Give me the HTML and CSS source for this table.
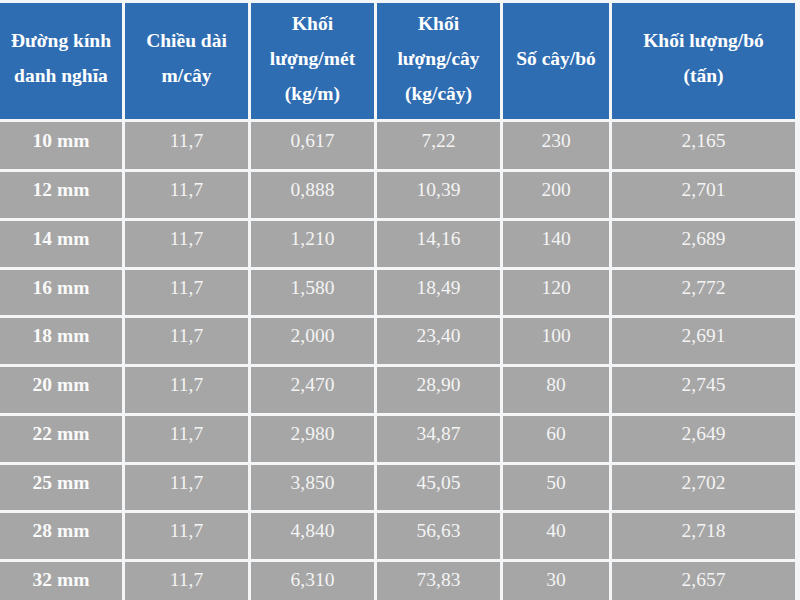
FILE: index.html
```html
<!DOCTYPE html>
<html lang="vi">
<head>
<meta charset="utf-8">
<title>Bảng trọng lượng thép</title>
<link rel="stylesheet" href="styles.css">
</head>
<body>
<div class="table">
  <div class="th">Đường kính<br>danh nghĩa</div>
  <div class="th">Chiều dài<br>m/cây</div>
  <div class="th">Khối<br>lượng/mét<br>(kg/m)</div>
  <div class="th">Khối<br>lượng/cây<br>(kg/cây)</div>
  <div class="th">Số cây/bó</div>
  <div class="th">Khối lượng/bó<br>(tấn)</div>

  <div class="td b">10 mm</div><div class="td">11,7</div><div class="td">0,617</div><div class="td">7,22</div><div class="td">230</div><div class="td">2,165</div>
  <div class="td b">12 mm</div><div class="td">11,7</div><div class="td">0,888</div><div class="td">10,39</div><div class="td">200</div><div class="td">2,701</div>
  <div class="td b">14 mm</div><div class="td">11,7</div><div class="td">1,210</div><div class="td">14,16</div><div class="td">140</div><div class="td">2,689</div>
  <div class="td b">16 mm</div><div class="td">11,7</div><div class="td">1,580</div><div class="td">18,49</div><div class="td">120</div><div class="td">2,772</div>
  <div class="td b">18 mm</div><div class="td">11,7</div><div class="td">2,000</div><div class="td">23,40</div><div class="td">100</div><div class="td">2,691</div>
  <div class="td b">20 mm</div><div class="td">11,7</div><div class="td">2,470</div><div class="td">28,90</div><div class="td">80</div><div class="td">2,745</div>
  <div class="td b">22 mm</div><div class="td">11,7</div><div class="td">2,980</div><div class="td">34,87</div><div class="td">60</div><div class="td">2,649</div>
  <div class="td b">25 mm</div><div class="td">11,7</div><div class="td">3,850</div><div class="td">45,05</div><div class="td">50</div><div class="td">2,702</div>
  <div class="td b">28 mm</div><div class="td">11,7</div><div class="td">4,840</div><div class="td">56,63</div><div class="td">40</div><div class="td">2,718</div>
  <div class="td b">32 mm</div><div class="td">11,7</div><div class="td">6,310</div><div class="td">73,83</div><div class="td">30</div><div class="td">2,657</div>
</div>
</body>
</html>
```

FILE: styles.css
```css
html, body {
  margin: 0;
  padding: 0;
  background: #f3f5f7;
  overflow: hidden;
}

.table {
  display: grid;
  grid-template-columns: 122px 123px 123px 123px 106px 183px;
  grid-template-rows: 116px 47px repeat(9, 45.75px);
  gap: 3px;
  padding-top: 3px;
  width: 795px;
  font-family: "Liberation Serif", "Times New Roman", serif;
  font-size: 19.5px;
}

.th {
  background: #2f6db3;
  color: #ffffff;
  font-weight: bold;
  line-height: 35px;
  display: flex;
  align-items: center;
  justify-content: center;
  text-align: center;
  padding-bottom: 6px;
  box-sizing: border-box;
}

.td {
  background: #a6a6a6;
  color: #f4f4f4;
  display: flex;
  align-items: center;
  justify-content: center;
  padding-bottom: 10px;
  box-sizing: border-box;
  line-height: 1;
}

.td.b {
  font-weight: bold;
  color: #fafafa;
}
```
